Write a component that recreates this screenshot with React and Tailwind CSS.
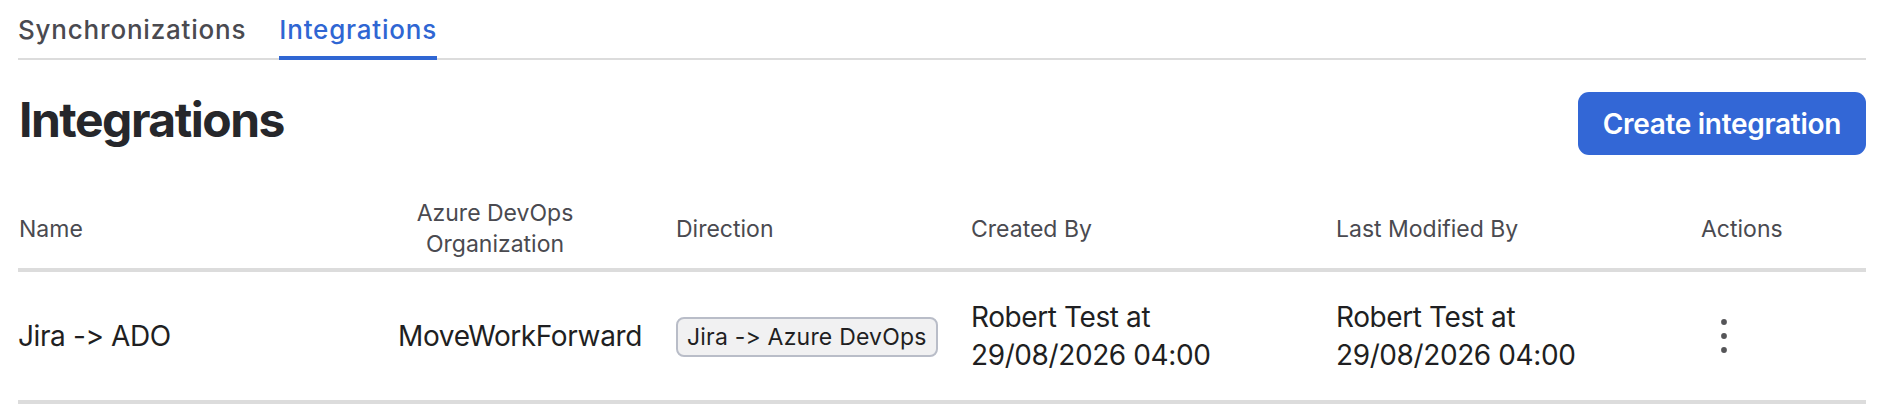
import { useState } from 'react';

const integrations = [
    {
        id: 1,
        name: 'Jira -> ADO',
        organization: 'MoveWorkForward',
        direction: 'Jira -> Azure DevOps',
        createdBy: 'Robert Test at 29/08/2026 04:00',
        modifiedBy: 'Robert Test at 29/08/2026 04:00',
    },
];

const tabs = ['Synchronizations', 'Integrations'];

const KebabIcon = () => (
    <svg width="8" height="36" viewBox="0 0 8 36" fill="#555558">
        <circle cx="4" cy="4" r="2.9" />
        <circle cx="4" cy="18" r="2.9" />
        <circle cx="4" cy="32" r="2.9" />
    </svg>
);

const cols = 'grid grid-cols-[362px_280px_311px_365px_365px_1fr]';

const App = () => {
    const [tab, setTab] = useState('Integrations');

    return (
        // calt off so "->" stays two characters instead of an arrow
        <div className="min-h-screen bg-white px-[18px] font-['Inter',sans-serif] text-[#1f1f22] [font-feature-settings:'calt'_0,'liga'_0]">
            <div className="flex gap-[33px] border-b-2 border-[#dcdcdc]">
                {tabs.map((t) => (
                    <button
                        key={t}
                        onClick={() => setTab(t)}
                        className={
                            t === tab
                                ? 'mb-[-2px] border-b-4 border-[#2f66d3] pt-[14px] pb-[10px] text-[26px] leading-[32px] font-medium tracking-[0.8px] text-[#2f66d3]'
                                : 'mb-[-2px] border-b-4 border-transparent pt-[14px] pb-[10px] text-[26px] leading-[32px] font-medium tracking-[0.8px] text-[#4a4a50]'
                        }
                    >
                        {t}
                    </button>
                ))}
            </div>

            <div className="mt-[32px] flex items-start justify-between">
                <h1 className="pl-[1px] text-[48px] leading-[56px] font-bold tracking-[-1.5px] text-[#26272b]">Integrations</h1>
                <button className="h-[63px] rounded-[11px] bg-[#3367d6] px-[25px] text-[28px] font-semibold tracking-[-0.3px] text-white">
                    Create integration
                </button>
            </div>

            <div className={`${cols} mt-[35px] h-[82px] items-center border-b-4 border-[#dcdcdc] text-[23px] leading-[31px] text-[#4a4a50]`}>
                <div className="pl-[1px]">Name</div>
                <div className="pr-[50px] text-center">
                    Azure DevOps
                    <br />
                    Organization
                </div>
                <div className="pl-[16px]">Direction</div>
                <div>Created By</div>
                <div>Last Modified By</div>
                <div>Actions</div>
            </div>

            {integrations.map((row) => (
                <div key={row.id} className={`${cols} h-[132px] items-center border-b-4 border-[#dcdcdc] text-[28px] leading-[38px] tracking-[-0.4px]`}>
                    <div>{row.name}</div>
                    <div className="text-center">{row.organization}</div>
                    <div className="pl-[16px]">
                        <span className="inline-block rounded-[8px] border-2 border-[#b9bdc8] bg-[#f1f1f2] px-[9px] py-[3px] text-[23px] leading-[30px] tracking-[0.2px]">
                            {row.direction}
                        </span>
                    </div>
                    <div className="pr-[40px]">{row.createdBy}</div>
                    <div className="pr-[40px]">{row.modifiedBy}</div>
                    <div>
                        <button className="flex w-[46px] justify-center">
                            <KebabIcon />
                        </button>
                    </div>
                </div>
            ))}
        </div>
    );
};

export default App;
